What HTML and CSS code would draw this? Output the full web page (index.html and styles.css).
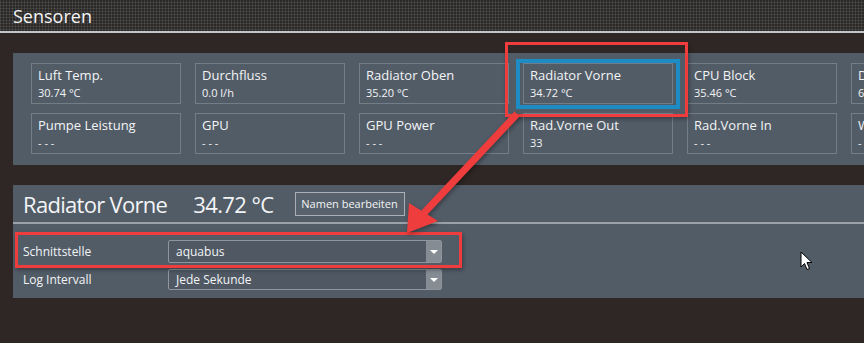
FILE: index.html
```html
<!DOCTYPE html>
<html lang="de">
<head>
  <meta charset="UTF-8">
  <title>Sensoren</title>
  <link rel="stylesheet" href="styles.css">
</head>
<body>
  <div class="titlebar">Sensoren</div>

  <div class="content">
    <div class="sensor-panel">
      <div class="sensor-grid">
        <div class="tile"><div class="tile-label">Luft Temp.</div><div class="tile-value">30.74 °C</div></div>
        <div class="tile"><div class="tile-label">Durchfluss</div><div class="tile-value">0.0 l/h</div></div>
        <div class="tile"><div class="tile-label">Radiator Oben</div><div class="tile-value">35.20 °C</div></div>
        <div class="tile"><div class="tile-label">Radiator Vorne</div><div class="tile-value">34.72 °C</div></div>
        <div class="tile"><div class="tile-label">CPU Block</div><div class="tile-value">35.46 °C</div></div>
        <div class="tile"><div class="tile-label">Durchfluss 2</div><div class="tile-value">64.0 l/h</div></div>
        <div class="tile"><div class="tile-label">Pumpe Leistung</div><div class="tile-value">- - -</div></div>
        <div class="tile"><div class="tile-label">GPU</div><div class="tile-value">- - -</div></div>
        <div class="tile"><div class="tile-label">GPU Power</div><div class="tile-value">- - -</div></div>
        <div class="tile"><div class="tile-label">Rad.Vorne Out</div><div class="tile-value">33</div></div>
        <div class="tile"><div class="tile-label">Rad.Vorne In</div><div class="tile-value">- - -</div></div>
        <div class="tile"><div class="tile-label">Wasser</div><div class="tile-value">- - -</div></div>
      </div>
    </div>

    <div class="detail-panel">
      <div class="detail-head">
        <span class="detail-name">Radiator Vorne</span>
        <span class="detail-temp">34.72 °C</span>
        <button class="edit-btn">Namen bearbeiten</button>
      </div>
      <div class="detail-body">
        <div class="field-row">
          <span class="field-label">Schnittstelle</span>
          <div class="select"><span class="select-text">aquabus</span><span class="select-arrow"></span></div>
        </div>
        <div class="field-row">
          <span class="field-label">Log Intervall</span>
          <div class="select select-short"><span class="select-text">Jede Sekunde</span><span class="select-arrow"></span></div>
        </div>
      </div>
    </div>
  </div>

  <!-- annotations -->
  <div class="mark mark-tile"></div>
  <div class="mark-blue"></div>
  <div class="mark mark-row"></div>
  <svg class="arrow" width="864" height="343" viewBox="0 0 864 343">
    <line x1="517" y1="114" x2="424" y2="213" stroke="#ef3d3d" stroke-width="7"/>
    <polygon points="407,233 409,203 438,221" fill="#ef3d3d"/>
  </svg>
  <svg class="cursor" width="14" height="21" viewBox="0 0 14 21">
    <path d="M1 1 L1 16 L4.5 12.5 L7 18.5 L9.5 17.5 L7 11.5 L12 11.5 Z" fill="#fff" stroke="#000" stroke-width="1"/>
  </svg>
</body>
</html>
```

FILE: styles.css
```css
body {
  margin: 0;
  width: 864px;
  height: 343px;
  background: #2f2725;
  font-family: 'Open Sans', 'Noto Sans', sans-serif;
  color: #f2f4f6;
  overflow: hidden;
  position: relative;
}

.titlebar {
  height: 33px;
  box-sizing: border-box;
  padding-left: 13px;
  font-size: 18px;
  line-height: 32px;
  color: #f4f4f4;
  background-color: #2b2928;
  background-image:
    linear-gradient(90deg, rgba(255,255,255,0.09) 50%, transparent 50%),
    linear-gradient(0deg, rgba(255,255,255,0.09) 50%, transparent 50%);
  background-size: 3px 3px;
  border-bottom: 2px solid #c3c6c8;
}

.content {
  padding: 20px 0 0 13px;
}

.sensor-panel {
  height: 112px;
  box-sizing: border-box;
  background: #525c67;
  padding: 10px 0 0 18px;
  overflow: hidden;
}

.sensor-grid {
  display: grid;
  grid-template-columns: repeat(6, 150px);
  grid-auto-rows: 41px;
  column-gap: 14px;
  row-gap: 9px;
}

.tile {
  border: 1px solid #737d88;
  padding: 2px 6px 0;
  box-sizing: border-box;
  white-space: nowrap;
}

.tile-label {
  font-size: 13px;
  line-height: 18px;
}

.tile-value {
  font-size: 11px;
  line-height: 17px;
}

.detail-panel {
  margin-top: 20px;
  height: 113px;
  background: #525c67;
}

.detail-head {
  height: 39px;
  box-sizing: border-box;
  border-bottom: 2px solid #9aa1a8;
  display: flex;
  align-items: center;
  padding-left: 10px;
}

.detail-name {
  font-size: 22px;
  letter-spacing: -0.7px;
}

.detail-temp {
  font-size: 22px;
  letter-spacing: -0.6px;
  margin-left: 26px;
}

.edit-btn {
  margin-left: 21px;
  height: 24px;
  width: 110px;
  padding: 0;
  background: #58626c;
  border: 1px solid #a9afb5;
  color: #f2f4f6;
  font-family: inherit;
  font-size: 11px;
}

.detail-body {
  padding: 16px 0 0 10px;
}

.field-row {
  display: flex;
  align-items: center;
  margin-bottom: 6px;
}

.field-label {
  width: 145px;
  font-size: 12px;
}

.select {
  width: 274px;
  height: 23px;
  box-sizing: border-box;
  border: 1px solid #8e959c;
  border-radius: 2px;
  background: #4f5863;
  display: flex;
  align-items: center;
}

.select-short {
  height: 21px;
}

.select-text {
  flex: 1;
  padding-left: 7px;
  font-size: 12px;
}

.select-arrow {
  width: 15px;
  align-self: stretch;
  background: #858c93;
  position: relative;
}

.select-arrow::after {
  content: '';
  position: absolute;
  left: 4px;
  top: 50%;
  margin-top: -2px;
  border-left: 4px solid transparent;
  border-right: 4px solid transparent;
  border-top: 4px solid #fff;
}

.mark {
  position: absolute;
  border: 3px solid #ef3d3d;
  box-shadow: 1px 2px 4px rgba(0,0,0,0.35);
}

.mark-tile {
  left: 505px;
  top: 42px;
  width: 177px;
  height: 69px;
}

.mark-blue {
  position: absolute;
  left: 516px;
  top: 59px;
  width: 156px;
  height: 42px;
  border: 4px solid #1d8cc4;
}

.mark-row {
  left: 15px;
  top: 232px;
  width: 441px;
  height: 30px;
}

.arrow {
  position: absolute;
  left: 0;
  top: 0;
  filter: drop-shadow(1px 2px 2px rgba(0,0,0,0.35));
}

.cursor {
  position: absolute;
  left: 800px;
  top: 251px;
}
```
